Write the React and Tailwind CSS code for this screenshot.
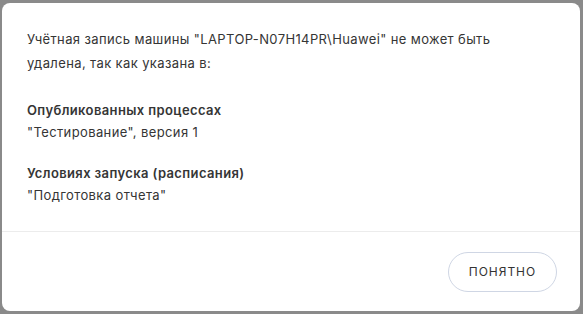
import React from 'react';

const App = () => {
  return (
    <div
      className="w-[583px] h-[314px] bg-[#8a8a8a] pt-[3px] pl-[2px] overflow-hidden"
      style={{ fontFamily: 'Inter, "Noto Sans", sans-serif' }}
    >
      <div className="w-[578px] h-[308px] bg-white rounded-[8px] flex flex-col text-[#353535]">
        {/* Body */}
        <div className="pt-[24px] px-[25px] pb-[25px] text-[13px] tracking-[0.38px]">
          <p className="leading-[24px] max-w-[500px]">
            Учётная запись машины "LAPTOP-N07H14PR\Huawei" не может быть удалена, так как указана в:
          </p>

          <div className="mt-[24px] leading-[22px]">
            <p className="font-semibold">Опубликованных процессах</p>
            <p>"Тестирование", версия 1</p>
          </div>

          <div className="mt-[19px] leading-[22px]">
            <p className="font-semibold">Условиях запуска (расписания)</p>
            <p>"Подготовка отчета"</p>
          </div>
        </div>

        {/* Footer */}
        <div className="border-t border-[#ececec] flex justify-end pt-[20px] pr-[23px]">
          <button className="h-[40px] w-[109px] rounded-full border border-[#cfd6e4] text-[12px] tracking-[0.08em] text-[#333333]">
            ПОНЯТНО
          </button>
        </div>
      </div>
    </div>
  );
};

export default App;
